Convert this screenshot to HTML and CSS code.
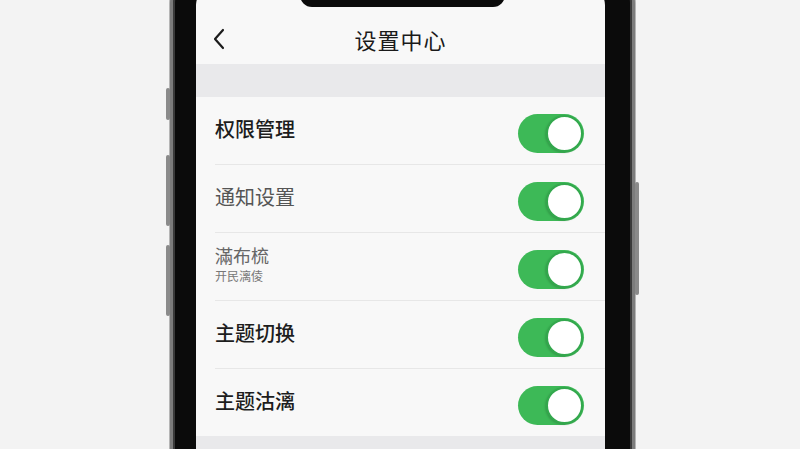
FILE: index.html
```
<!DOCTYPE html>
<html lang="zh-CN">
<head>
    <meta charset="UTF-8">
    <meta name="viewport" content="width=device-width, initial-scale=1.0">
    <title>设置中心</title>
    <link rel="stylesheet" href="styles.css">
</head>
<body>
    <div class="phone">
        <span class="side-btn left btn-1"></span>
        <span class="side-btn left btn-2"></span>
        <span class="side-btn left btn-3"></span>
        <span class="side-btn right btn-4"></span>

        <div class="screen">
            <div class="notch"></div>

            <header class="nav-bar">
                <svg class="back" width="14" height="22" viewBox="0 0 14 22">
                    <polyline points="11,2 3,11 11,20" fill="none" stroke="#1c1c1c" stroke-width="2.2" stroke-linecap="round" stroke-linejoin="round"/>
                </svg>
                <h1>设置中心</h1>
            </header>

            <div class="band"></div>

            <ul class="settings">
                <li class="row">
                    <span class="label">权限管理</span>
                    <span class="toggle on"></span>
                </li>
                <li class="row">
                    <span class="label muted">通知设置</span>
                    <span class="toggle on"></span>
                </li>
                <li class="row">
                    <div class="label-group">
                        <span class="label small">滿布梳</span>
                        <span class="sub">开民漓倰</span>
                    </div>
                    <span class="toggle on"></span>
                </li>
                <li class="row">
                    <span class="label">主题切换</span>
                    <span class="toggle on"></span>
                </li>
                <li class="row">
                    <span class="label">主题沽漓</span>
                    <span class="toggle on"></span>
                </li>
            </ul>

            <div class="band"></div>
        </div>
    </div>
</body>
</html>
```

FILE: styles.css
```
body {
    margin: 0;
    height: 449px;
    overflow: hidden;
    background: #f3f3f3;
    font-family: "Noto Sans CJK SC", "Noto Sans", sans-serif;
}
.phone {
    position: relative;
    width: 465px;
    height: 540px;
    margin: -40px 0 0 170px;
    padding: 26px 27px 0 23px;
    box-sizing: border-box;
    background: #0b0b0b;
    border: 3px solid #7c7c7c;
    border-radius: 44px;
    box-shadow: inset 0 0 0 2px #3a3a3a, 0 0 0 1px #b5b5b5;
}
.side-btn {
    position: absolute;
    width: 4px;
    background: #8a8a8a;
    border-radius: 2px;
}
.side-btn.left { left: -7px; }
.side-btn.right { right: -7px; }
.btn-1 { top: 125px; height: 32px; }
.btn-2 { top: 192px; height: 71px; }
.btn-3 { top: 282px; height: 71px; }
.btn-4 { top: 219px; height: 113px; }

.screen {
    position: relative;
    height: 600px;
    background: #f8f8f8;
    border-radius: 16px 16px 0 0;
    overflow: hidden;
}
.notch {
    position: absolute;
    top: 0;
    left: 104px;
    width: 205px;
    height: 18px;
    background: #0b0b0b;
    border-radius: 0 0 12px 12px;
}
.nav-bar {
    position: relative;
    display: flex;
    align-items: center;
    justify-content: center;
    height: 50px;
    padding-top: 25px;
}
.nav-bar .back {
    position: absolute;
    left: 16px;
    top: 39px;
}
.nav-bar h1 {
    margin: 0;
    font-size: 22px;
    font-weight: 400;
    color: #1a1a1a;
    letter-spacing: 1px;
}
.band {
    height: 33px;
    background: #e9e9eb;
}
.settings {
    list-style: none;
    margin: 0;
    padding: 0 0 0 19px;
}
.row {
    display: flex;
    align-items: center;
    justify-content: space-between;
    height: 67px;
    padding-right: 21px;
    border-bottom: 1px solid #e7e7e7;
}
.row:last-child {
    border-bottom: none;
}
.label {
    font-size: 20px;
    font-weight: 500;
    color: #1d1d1d;
    margin-top: -4px;
}
.label.muted {
    font-weight: 400;
    color: #555;
}
.label-group {
    display: flex;
    flex-direction: column;
    margin-top: -6px;
}
.label.small {
    font-size: 18px;
    font-weight: 400;
    color: #666;
    margin-top: 0;
    line-height: 24px;
}
.sub {
    font-size: 12px;
    color: #777;
    line-height: 16px;
    margin-top: 1px;
}
.toggle {
    position: relative;
    width: 66px;
    height: 39px;
    margin-top: 5px;
    border-radius: 20px;
    background: #3db957;
    flex-shrink: 0;
}
.toggle::after {
    content: "";
    position: absolute;
    top: 1px;
    right: 1px;
    width: 33px;
    height: 33px;
    border-radius: 50%;
    background: #fff;
    border: 2px solid #33a84d;
    box-shadow: -1px 1px 2px rgba(0, 0, 0, 0.15);
}
```
